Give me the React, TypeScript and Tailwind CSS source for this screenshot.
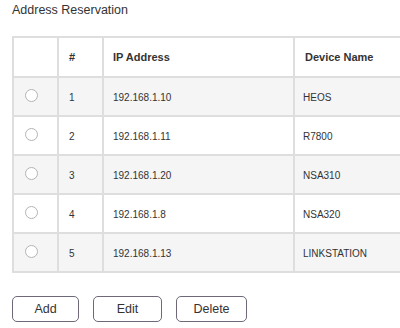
const rows = [
  { id: 1, ip: '192.168.1.10', name: 'HEOS' },
  { id: 2, ip: '192.168.1.11', name: 'R7800' },
  { id: 3, ip: '192.168.1.20', name: 'NSA310' },
  { id: 4, ip: '192.168.1.8', name: 'NSA320' },
  { id: 5, ip: '192.168.1.13', name: 'LINKSTATION' },
]

const cols = 'grid grid-cols-[43px_45px_191px_1fr]'

function Radio() {
  return <span className="block w-[13px] h-[13px] rounded-full border border-[#b4b4b4] bg-white" />
}

export default function App() {
  return (
    <div
      className="w-[400px] h-[328px] overflow-hidden bg-white text-[#333]"
      style={{ fontFamily: '"Liberation Sans", Arial, sans-serif' }}
    >
      {/* 제목 */}
      <div className="pl-[12px] pt-[3px] h-[36px] text-[12.5px] leading-[15px]">Address Reservation</div>

      {/* 테이블 */}
      <div className="ml-[12px] w-[460px] border-2 border-[#dedede]">
        <div className={`${cols} h-[38px] items-center text-[11px] font-bold bg-white`}>
          <div />
          <div className="h-full flex items-center border-l-2 border-[#dedede] pl-[10px]">#</div>
          <div className="h-full flex items-center border-l-2 border-[#dedede] pl-[9px]">IP Address</div>
          <div className="h-full flex items-center border-l-2 border-[#dedede] pl-[10px]">Device Name</div>
        </div>
        {rows.map((r, i) => (
          <div
            key={r.id}
            className={`${cols} h-[39px] border-t-2 border-[#dedede] text-[10px] ${i % 2 === 0 ? 'bg-[#f5f5f5]' : 'bg-white'}`}
          >
            <div className="h-full flex items-center pl-[11px] pb-[2px]">
              <Radio />
            </div>
            <div className="h-full flex items-center border-l-2 border-[#dedede] pl-[10px] pt-[2px]">{r.id}</div>
            <div className="h-full flex items-center border-l-2 border-[#dedede] pl-[9px] pt-[2px]">{r.ip}</div>
            <div className="h-full flex items-center border-l-2 border-[#dedede] pl-[8px] pt-[2px]">{r.name}</div>
          </div>
        ))}
      </div>

      {/* 버튼 */}
      <div className="flex gap-[14px] pl-[12px] mt-[23px]">
        <button className="w-[67px] h-[26px] rounded-[5px] border-[1.5px] border-[#6e6878] bg-white text-[12.5px] text-[#333]">Add</button>
        <button className="w-[69px] h-[26px] rounded-[5px] border-[1.5px] border-[#6e6878] bg-white text-[12.5px] text-[#333]">Edit</button>
        <button className="w-[71px] h-[26px] rounded-[5px] border-[1.5px] border-[#6e6878] bg-white text-[12.5px] text-[#333]">Delete</button>
      </div>
    </div>
  )
}
